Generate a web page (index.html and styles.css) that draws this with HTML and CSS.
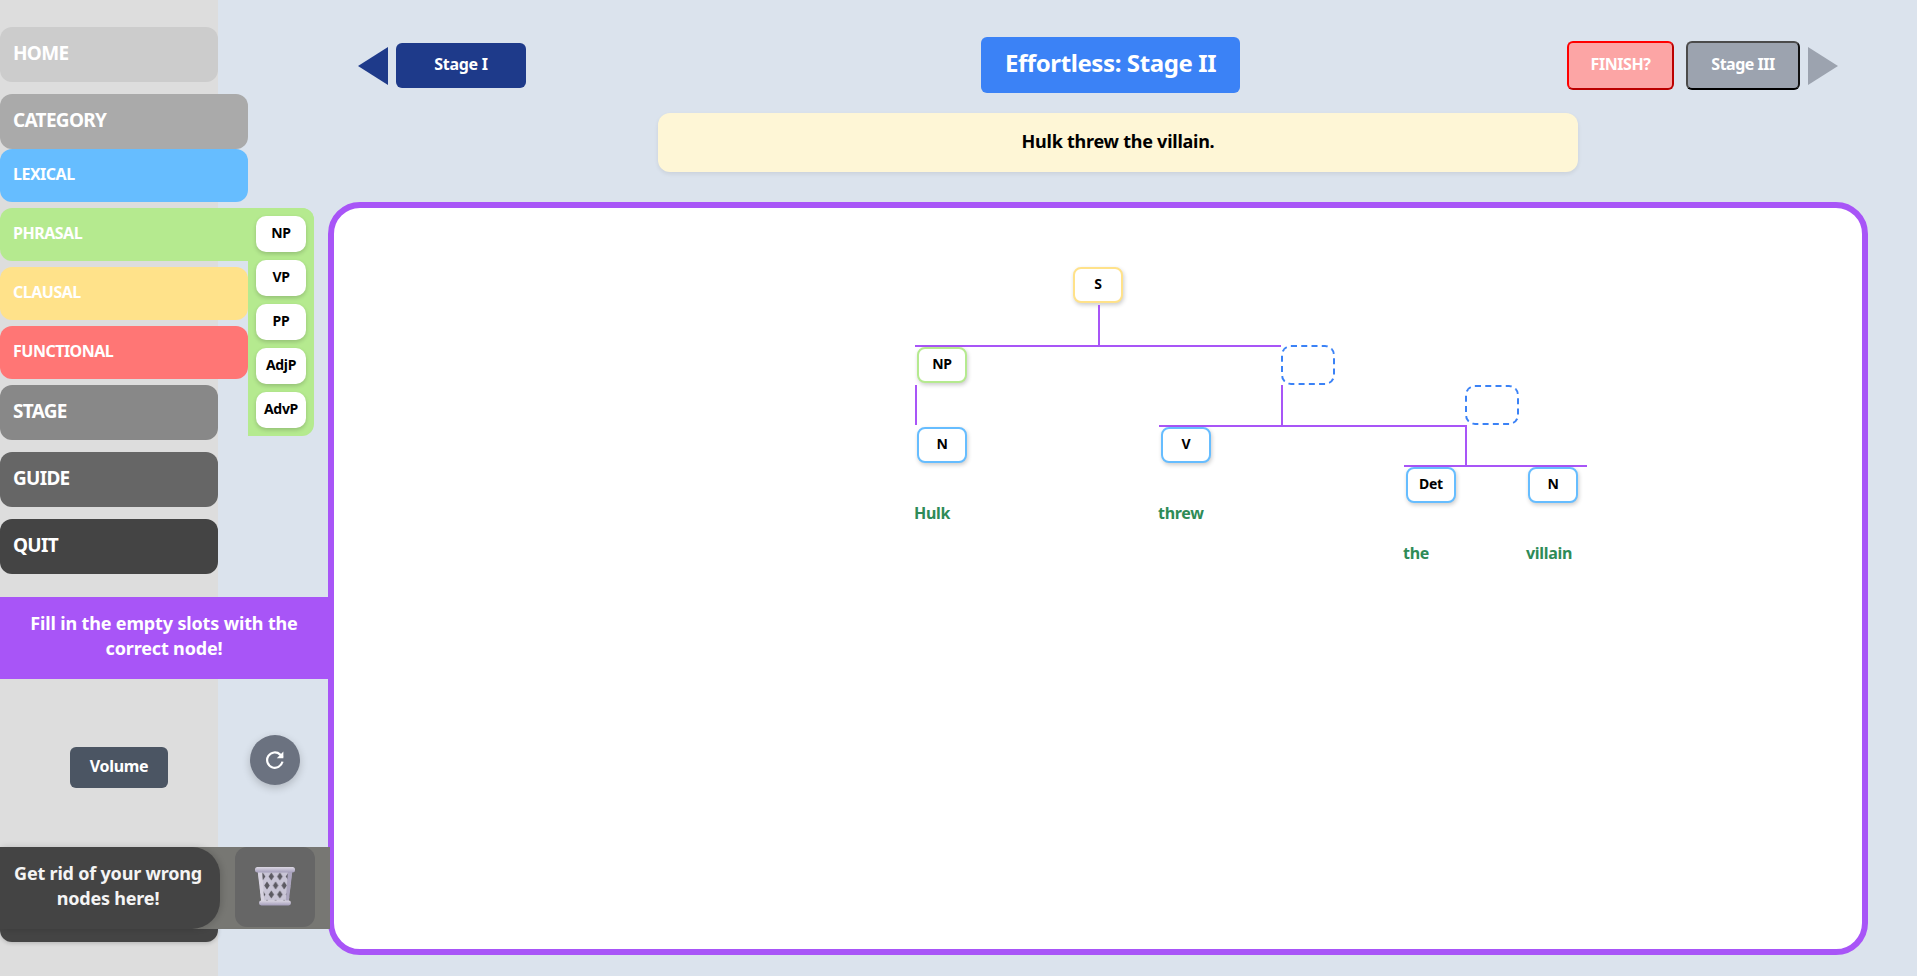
FILE: index.html
```html
<!DOCTYPE html>
<html lang="en">
<head>
<meta charset="utf-8">
<title>Effortless: Stage II</title>
<link rel="stylesheet" href="styles.css">
</head>
<body>
<div class="page">
  <aside class="sidebar">
    <button class="side side-home">HOME</button>
    <div class="cat-group">
      <button class="side side-cat">CATEGORY</button>
      <button class="cat cat-lex">LEXICAL</button>
      <button class="cat cat-phr">PHRASAL</button>
      <button class="cat cat-cla">CLAUSAL</button>
      <button class="cat cat-fun">FUNCTIONAL</button>
    </div>
    <button class="side side-stage">STAGE</button>
    <button class="side side-guide">GUIDE</button>
    <button class="side side-quit">QUIT</button>
    <button class="side side-hidden"></button>
    <div class="chips">
      <span class="chip">NP</span>
      <span class="chip">VP</span>
      <span class="chip">PP</span>
      <span class="chip">AdjP</span>
      <span class="chip">AdvP</span>
    </div>
    <div class="hint">Fill in the empty slots with the correct node!</div>
    <button class="volume">Volume</button>
    <button class="reset" aria-label="Reset">
      <svg viewBox="0 0 24 24" width="24" height="24" fill="none" stroke="#fff" stroke-width="2.2">
        <path d="M19.4 13.6A7.7 7.7 0 1 1 17.2 6.6L19.6 9"/>
        <path d="M20.4 3.6V10.2H13.8Z" fill="#fff" stroke="none"/>
      </svg>
    </button>
    <div class="trash-strip">
      <div class="trash-label">Get rid of your wrong nodes here!</div>
      <div class="trash-box">
        <svg viewBox="0 0 40 40" width="40" height="40">
          <defs>
            <linearGradient id="rim" x1="0" y1="0" x2="0" y2="1">
              <stop offset="0" stop-color="#dcd8e4"/>
              <stop offset="1" stop-color="#a49dba"/>
            </linearGradient>
            <pattern id="mesh" width="8.6" height="18" patternUnits="userSpaceOnUse" patternTransform="translate(3.4 5)">
              <rect width="8.6" height="18" fill="#c9c5d6"/>
              <path d="M4.3 .5 7 4.6 4.3 8.6 1.6 4.6Z" fill="#5c5a62"/>
              <path d="M0 9.5 2.7 13.6 0 17.6Z M8.6 9.5 5.9 13.6 8.6 17.6Z" fill="#5c5a62"/>
            </pattern>
          </defs>
          <path d="M3 3H37L33.5 37H6.5Z" fill="url(#mesh)"/>
          <path d="M2.5 3 6.5 37H9.5L7 3Z" fill="#d6d2e0"/>
          <path d="M37.5 3 33.5 37H30.5L33 3Z" fill="#aca6bf"/>
          <rect x="0" y="0" width="40" height="5.5" rx="2.5" fill="url(#rim)"/>
          <rect x="4" y="33.5" width="32" height="5" rx="2.4" fill="url(#rim)"/>
        </svg>
      </div>
    </div>
  </aside>

  <main class="main">
    <header class="topbar">
      <div class="nav nav-left">
        <span class="arrow arrow-left"></span>
        <button class="stage-btn stage-prev">Stage I</button>
      </div>
      <h1 class="title">Effortless: Stage II</h1>
      <div class="nav nav-right">
        <button class="finish">FINISH?</button>
        <button class="stage-btn stage-next">Stage III</button>
        <span class="arrow arrow-right"></span>
      </div>
    </header>
    <div class="sentence-row"><p class="sentence">Hulk threw the villain.</p></div>

    <section class="board">
      <div class="tree">
        <span class="node n-clausal n-s">S</span>
        <i class="vl v1"></i>
        <i class="hl h1"></i>
        <span class="node n-phrasal n-np">NP</span>
        <span class="slot s1"></span>
        <i class="vl v2"></i>
        <span class="node n-lexical n-n1">N</span>
        <i class="vl v3"></i>
        <i class="hl h2"></i>
        <span class="node n-lexical n-v">V</span>
        <span class="slot s2"></span>
        <i class="vl v4"></i>
        <i class="hl h3"></i>
        <span class="node n-lexical n-det">Det</span>
        <span class="node n-lexical n-n2">N</span>
        <span class="word w-hulk">Hulk</span>
        <span class="word w-threw">threw</span>
        <span class="word w-the">the</span>
        <span class="word w-villain">villain</span>
      </div>
    </section>
  </main>
</div>
</body>
</html>
```
FILE: styles.css
```css
* { box-sizing: border-box; }
html, body { margin: 0; height: 976px; overflow: hidden; }
body { background: #dbe3ed; font-family: "Noto Sans", sans-serif; font-weight: 700; color: #000; }
button { font: inherit; border: 0; margin: 0; padding: 0 0 4px; color: #fff; }

.page { display: flex; height: 976px; }

.sidebar {
  position: relative;
  flex: 0 0 218px;
  width: 218px;
  background: #dddddd;
  padding-top: 27px;
  display: flex;
  flex-direction: column;
  align-items: flex-start;
  z-index: 2;
}
.side, .cat {
  display: block;
  text-align: left;
  padding-left: 13px;
  border-radius: 12px;
  white-space: nowrap;
}
.side { width: 218px; height: 55px; font-size: 19px; margin-bottom: 12px; letter-spacing: -0.7px; }
.cat { width: 248px; height: 53px; font-size: 16px; margin-bottom: 6px; letter-spacing: -0.5px; }
.cat-group { display: flex; flex-direction: column; margin-bottom: 6px; }
.side-home { background: #cccccc; }
.side-cat { width: 248px; background: #aaaaaa; margin-bottom: 0; }
.cat-lex { background: #66bdff; }
.cat-phr { background: #b5ea8f; width: 314px; }
.cat-cla { background: #ffe28a; }
.cat-fun { background: #ff7675; margin-bottom: 0; }
.side-stage { background: #888888; }
.side-guide { background: #666666; }
.side-quit { background: #444444; }
.side-hidden { position: absolute; left: 0; top: 887px; height: 55px; background: #444444; margin: 0; box-shadow: 0 1px 4px rgba(0,0,0,.2); }

.chips {
  position: absolute;
  left: 248px;
  top: 208px;
  width: 66px;
  height: 228px;
  padding: 8px;
  background: #b5ea8f;
  border-radius: 0 12px 12px 0;
  display: flex;
  flex-direction: column;
  gap: 8px;
}
.chip {
  height: 36px;
  padding-bottom: 4px;
  background: #fff;
  border-radius: 10px;
  box-shadow: 0 2px 4px rgba(0,0,0,.18);
  display: flex;
  align-items: center;
  justify-content: center;
  font-size: 14px;
  letter-spacing: -0.3px;
}

.hint {
  position: absolute;
  left: 0;
  top: 597px;
  width: 330px;
  height: 82px;
  padding: 0 20px 4px 18px;
  background: #a855f7;
  color: #fff;
  font-size: 18px;
  line-height: 25px;
  display: flex;
  align-items: center;
  justify-content: center;
  text-align: center;
  letter-spacing: -0.15px;
}
.volume {
  position: absolute;
  left: 70px;
  top: 747px;
  width: 98px;
  height: 41px;
  background: #4b5563;
  border-radius: 6px;
  font-size: 16px;
  letter-spacing: -0.3px;
}
.reset {
  position: absolute;
  left: 250px;
  top: 735px;
  width: 50px;
  height: 50px;
  padding: 0;
  border-radius: 50%;
  background: #6b7280;
  box-shadow: 0 3px 8px rgba(0,0,0,.2);
  display: flex;
  align-items: center;
  justify-content: center;
}
.trash-strip {
  position: absolute;
  left: 0;
  top: 847px;
  width: 330px;
  height: 82px;
  background: #777773;
  display: flex;
  align-items: flex-start;
}
.trash-label {
  width: 220px;
  height: 82px;
  padding: 0 14px 4px 10px;
  background: #444444;
  border-radius: 0 28px 28px 0;
  color: #f4f4f4;
  font-size: 18px;
  line-height: 25px;
  text-align: center;
  display: flex;
  align-items: center;
  justify-content: center;
  letter-spacing: -0.2px;
  box-shadow: 2px 0 6px rgba(0,0,0,.15);
}
.trash-box {
  width: 80px;
  height: 80px;
  margin-left: 15px;
  background: #666666;
  border-radius: 12px;
  display: flex;
  align-items: center;
  justify-content: center;
}

.main { flex: 1; min-width: 0; padding-left: 110px; padding-right: 49px; display: flex; flex-direction: column; }
.topbar { position: relative; height: 113px; padding-top: 37px; padding-left: 653px; display: flex; align-items: flex-start; }
.nav { position: absolute; display: flex; align-items: center; }
.nav-left { left: 30px; top: 43px; gap: 8px; }
.nav-right { right: 30px; top: 41px; gap: 12px; }
.arrow { width: 0; height: 0; border-top: 19px solid transparent; border-bottom: 19px solid transparent; }
.arrow-left { border-right: 30px solid #1e3a8a; }
.arrow-right { border-left: 30px solid #9ca3af; margin-left: -4px; }
.stage-btn { border-radius: 6px; font-size: 16px; letter-spacing: -0.3px; }
.stage-prev { width: 130px; height: 45px; background: #1e3a8a; }
.stage-next { width: 114px; height: 49px; background: #9ca3af; border: 2px solid; border-color: #4b4b4b #111 #000 #4b4b4b; letter-spacing: -0.5px; }
.finish { width: 107px; height: 49px; border-radius: 6px; background: #fca5a5; border: 2px solid; border-color: #f00 #b00 #b00 #f00; font-size: 16px; letter-spacing: -0.45px; }
.title { margin: 0; width: 259px; height: 56px; padding-bottom: 6px; background: #3b82f6; color: #fff; border-radius: 6px; font-size: 24px; font-weight: 700; display: flex; align-items: center; justify-content: center; letter-spacing: -0.4px; }

.sentence-row { display: flex; height: 89px; padding-left: 330px; }
.sentence { margin: 0; width: 920px; height: 59px; padding-bottom: 4px; background: #fef6d6; border-radius: 12px; box-shadow: 0 2px 4px rgba(0,0,0,.08); display: flex; align-items: center; justify-content: center; font-size: 18px; letter-spacing: -0.25px; }

.board { flex: 0 0 753px; background: #fff; border: 6px solid #a855f7; border-radius: 32px; position: relative; }
.tree { position: absolute; left: -334px; top: -208px; width: 1917px; height: 976px; }
.node { position: absolute; width: 50px; height: 36px; padding-bottom: 4px; background: #fff; border: 2px solid; border-radius: 8px; box-shadow: 1px 2px 4px rgba(0,0,0,.2); display: flex; align-items: center; justify-content: center; font-size: 14px; letter-spacing: -0.3px; }
.n-clausal { border-color: #ffe28a; }
.n-phrasal { border-color: #b5ea8f; }
.n-lexical { border-color: #66bdff; }
.slot { position: absolute; width: 54px; height: 40px; border: 2px dashed #3b82f6; border-radius: 10px; }
.vl, .hl { position: absolute; background: #a855f7; }
.vl { width: 2px; }
.hl { height: 2px; }
.word { position: absolute; font-size: 16px; line-height: 20px; color: #2e8b57; letter-spacing: -0.3px; }

.n-s { left: 1073px; top: 267px; }
.n-np { left: 917px; top: 347px; }
.n-n1 { left: 917px; top: 427px; }
.n-v { left: 1161px; top: 427px; }
.n-det { left: 1406px; top: 467px; }
.n-n2 { left: 1528px; top: 467px; }
.s1 { left: 1281px; top: 345px; }
.s2 { left: 1465px; top: 385px; }
.v1 { left: 1098px; top: 305px; height: 40px; }
.v2 { left: 915px; top: 385px; height: 40px; }
.v3 { left: 1281px; top: 385px; height: 40px; }
.v4 { left: 1465px; top: 425px; height: 40px; }
.h1 { left: 915px; top: 345px; width: 366px; }
.h2 { left: 1159px; top: 425px; width: 307px; }
.h3 { left: 1404px; top: 465px; width: 183px; }
.w-hulk { left: 914px; top: 503px; }
.w-threw { left: 1158px; top: 503px; }
.w-the { left: 1403px; top: 543px; }
.w-villain { left: 1526px; top: 543px; }
```
